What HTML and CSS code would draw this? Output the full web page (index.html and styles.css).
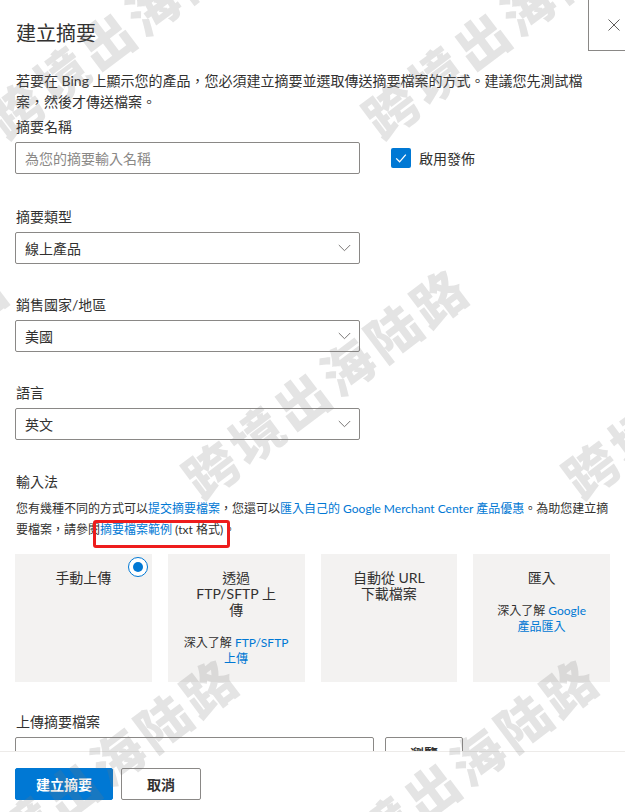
FILE: index.html
```html
<!DOCTYPE html>
<html lang="zh-Hant">
<head>
<meta charset="utf-8">
<title>建立摘要</title>
<link rel="stylesheet" href="styles.css">
</head>
<body>
<div class="panel">
  <div class="content">
    <h1 class="title">建立摘要</h1>
    <p class="intro">若要在 Bing 上顯示您的產品，您必須建立摘要並選取傳送摘要檔案的方式。建議您先測試檔案，然後才傳送檔案。</p>

    <div class="field field-first">
      <span class="field-label">摘要名稱</span>
      <div class="row control">
        <div class="textbox placeholder">為您的摘要輸入名稱</div>
        <div class="check">
          <span class="check-box"><svg width="20" height="20" viewBox="0 0 20 20"><path d="M5.2 10.4 L8.6 13.8 L14.8 6.6" fill="none" stroke="#fff" stroke-width="1.3"/></svg></span>
          <span>啟用發佈</span>
        </div>
      </div>
    </div>

    <div class="field field-second">
      <span class="field-label">摘要類型</span>
      <div class="textbox control">線上產品<svg class="chev" width="13" height="8" viewBox="0 0 13 8"><path d="M0.8 1 L6.5 6.7 L12.2 1" fill="none" stroke="#797775" stroke-width="1"/></svg></div>
    </div>

    <div class="field">
      <span class="field-label">銷售國家/地區</span>
      <div class="textbox control">美國<svg class="chev" width="13" height="8" viewBox="0 0 13 8"><path d="M0.8 1 L6.5 6.7 L12.2 1" fill="none" stroke="#797775" stroke-width="1"/></svg></div>
    </div>

    <div class="field">
      <span class="field-label">語言</span>
      <div class="textbox control">英文<svg class="chev" width="13" height="8" viewBox="0 0 13 8"><path d="M0.8 1 L6.5 6.7 L12.2 1" fill="none" stroke="#797775" stroke-width="1"/></svg></div>
    </div>

    <div class="field field-method">
      <span class="field-label">輸入法</span>
      <p class="method-desc">您有幾種不同的方式可以<a class="link">提交摘要檔案</a>，您還可以<a class="link">匯入自己的 Google Merchant Center 產品優惠</a>。為助您建立摘要檔案，請參閱<span class="mark"><a class="link">摘要檔案範例</a> (txt 格式)</span>。</p>
      <div class="methods">
        <div class="tile">
          <span class="radio"></span>
          <div class="tile-title">手動上傳</div>
        </div>
        <div class="tile">
          <div class="tile-title">透過 FTP/SFTP 上傳</div>
          <div class="tile-note">深入了解 <a class="link">FTP/SFTP 上傳</a></div>
        </div>
        <div class="tile">
          <div class="tile-title">自動從 URL 下載檔案</div>
        </div>
        <div class="tile">
          <div class="tile-title">匯入</div>
          <div class="tile-note">深入了解 <a class="link">Google <span class="keep">產品匯入</span></a></div>
        </div>
      </div>
    </div>

    <div class="field field-upload">
      <span class="field-label">上傳摘要檔案</span>
      <div class="row control">
        <div class="textbox upload-box"></div>
        <div class="browse">瀏覽</div>
      </div>
    </div>
  </div>

  <div class="footer">
    <button class="btn btn-primary">建立摘要</button>
    <button class="btn btn-default">取消</button>
  </div>

  <button class="close" aria-label="關閉"><svg width="12" height="12" viewBox="0 0 12 12"><path d="M0.5 0.5 L11.5 11.5 M11.5 0.5 L0.5 11.5" stroke="#605e5c" stroke-width="1" fill="none"/></svg></button>

  <div class="watermarks" aria-hidden="true">
    <span class="wm wm1">跨境出海陆路</span>
    <span class="wm wm2">跨境出海陆路</span>
    <span class="wm wm3">跨境出海陆路</span>
    <span class="wm wm4">跨境出海陆路</span>
    <span class="wm wm5">跨境出海陆路</span>
    <span class="wm wm6">跨境出海陆路</span>
    <span class="wm wm7">跨境出海陆路</span>
  </div>
</div>
</body>
</html>
```

FILE: styles.css
```css
* { box-sizing: border-box; }
html, body { margin: 0; padding: 0; background: #fff; }
body {
  font-family: Lato, "Noto Sans CJK TC", sans-serif;
  color: #323130;
}
.panel {
  position: relative;
  width: 625px;
  height: 812px;
  overflow: hidden;
  display: flex;
  flex-direction: column;
  background: #fff;
}
.content {
  flex: 1;
  overflow: hidden;
  padding: 19px 15px 0;
}
.title {
  margin: 0;
  font-size: 20px;
  line-height: 28px;
  font-weight: 400;
  padding-left: 1px;
}
.intro {
  margin: 23px 0 0;
  max-width: 590px;
  font-size: 14px;
  line-height: 21px;
  padding-left: 1px;
}
.field { margin-top: 31px; }
.field-first { margin-top: 5px; }
.field-second { margin-top: 33px; }
.field-method { margin-top: 32px; }
.field-upload { margin-top: 30px; }
.field-label {
  display: block;
  font-size: 14px;
  line-height: 20px;
  padding-left: 1px;
}
.control { margin-top: 5px; }
.row { display: flex; align-items: center; }
.textbox {
  width: 345px;
  height: 32px;
  border: 1px solid #8a8886;
  border-radius: 2px;
  padding: 0 8px 0 9px;
  font-size: 14px;
  display: flex;
  align-items: center;
  justify-content: space-between;
  background: #fff;
}
.placeholder { color: #8a8886; }
.chev { display: block; }
.check {
  display: flex;
  align-items: center;
  gap: 8px;
  margin-left: 31px;
  font-size: 14px;
}
.check-box {
  width: 20px;
  height: 20px;
  border-radius: 2px;
  background: #0078d4;
  display: block;
}
.check-box svg { display: block; }
.method-desc {
  margin: 6px -6px 0 0;
  font-size: 12px;
  line-height: 21px;
  padding-left: 1px;
}
.link { color: #0078d4; text-decoration: none; }
.mark { position: relative; }
.mark::after {
  content: "";
  position: absolute;
  left: -7px;
  right: -7px;
  top: -2px;
  bottom: -11px;
  border: 3px solid #ee1c1c;
  border-radius: 3px;
}
.methods {
  margin-top: 14px;
  display: grid;
  grid-template-columns: repeat(4, 1fr);
  gap: 16px;
}
.tile {
  position: relative;
  height: 128px;
  background: #f3f2f1;
  padding-top: 16px;
  text-align: center;
}
.tile-title {
  font-size: 14px;
  line-height: 16px;
  padding: 0 26px;
}
.tile-note {
  width: 114px;
  margin: 17px auto 0;
  font-size: 12px;
  line-height: 16px;
}
.keep { display: inline-block; }
.radio {
  position: absolute;
  top: 3px;
  right: 4px;
  width: 20px;
  height: 20px;
  border-radius: 50%;
  border: 1.5px solid #0078d4;
  background: #fff;
}
.radio::after {
  content: "";
  position: absolute;
  left: 50%;
  top: 50%;
  width: 10px;
  height: 10px;
  margin: -5px 0 0 -5px;
  border-radius: 50%;
  background: #0078d4;
}
.upload-box { width: 359px; }
.browse {
  margin-left: 11px;
  width: 78px;
  height: 32px;
  border: 1px solid #8a8886;
  border-radius: 2px;
  font-size: 14px;
  font-weight: 600;
  display: flex;
  align-items: center;
  justify-content: center;
}
.footer {
  height: 61px;
  flex: none;
  border-top: 1px solid #edebe9;
  padding: 16px 15px 0;
  display: flex;
  align-items: flex-start;
  gap: 8px;
  background: #fff;
}
.btn {
  height: 32px;
  min-width: 80px;
  padding: 0 20px;
  border-radius: 2px;
  font-family: Lato, "Noto Sans CJK TC", sans-serif;
  font-size: 14px;
  font-weight: 600;
  cursor: pointer;
}
.btn-primary { background: #0078d4; border: 1px solid #0078d4; color: #fff; }
.btn-default { background: #fff; border: 1px solid #8a8886; color: #323130; }
.close {
  position: absolute;
  top: -2px;
  left: 588px;
  width: 52px;
  height: 53px;
  border: 1px solid #8a8886;
  background: #fff;
  padding: 0 0 0 19px;
  display: flex;
  align-items: center;
}
.close svg { display: block; }
.watermarks {
  position: absolute;
  inset: 0;
  pointer-events: none;
  overflow: hidden;
}
.wm {
  position: absolute;
  font-family: "Noto Sans CJK SC", sans-serif;
  font-weight: 900;
  font-size: 52px;
  line-height: 52px;
  letter-spacing: 5px;
  color: rgba(120, 120, 120, 0.2);
  white-space: nowrap;
  transform: rotate(-37deg);
  transform-origin: 0 50%;
}
.wm1 { left: -6px; top: 98px; }
.wm2 { left: 369px; top: 98px; }
.wm3 { left: -271px; top: 458px; }
.wm4 { left: 189px; top: 458px; }
.wm5 { left: 569px; top: 458px; }
.wm6 { left: -41px; top: 848px; }
.wm7 { left: 319px; top: 848px; }
```
